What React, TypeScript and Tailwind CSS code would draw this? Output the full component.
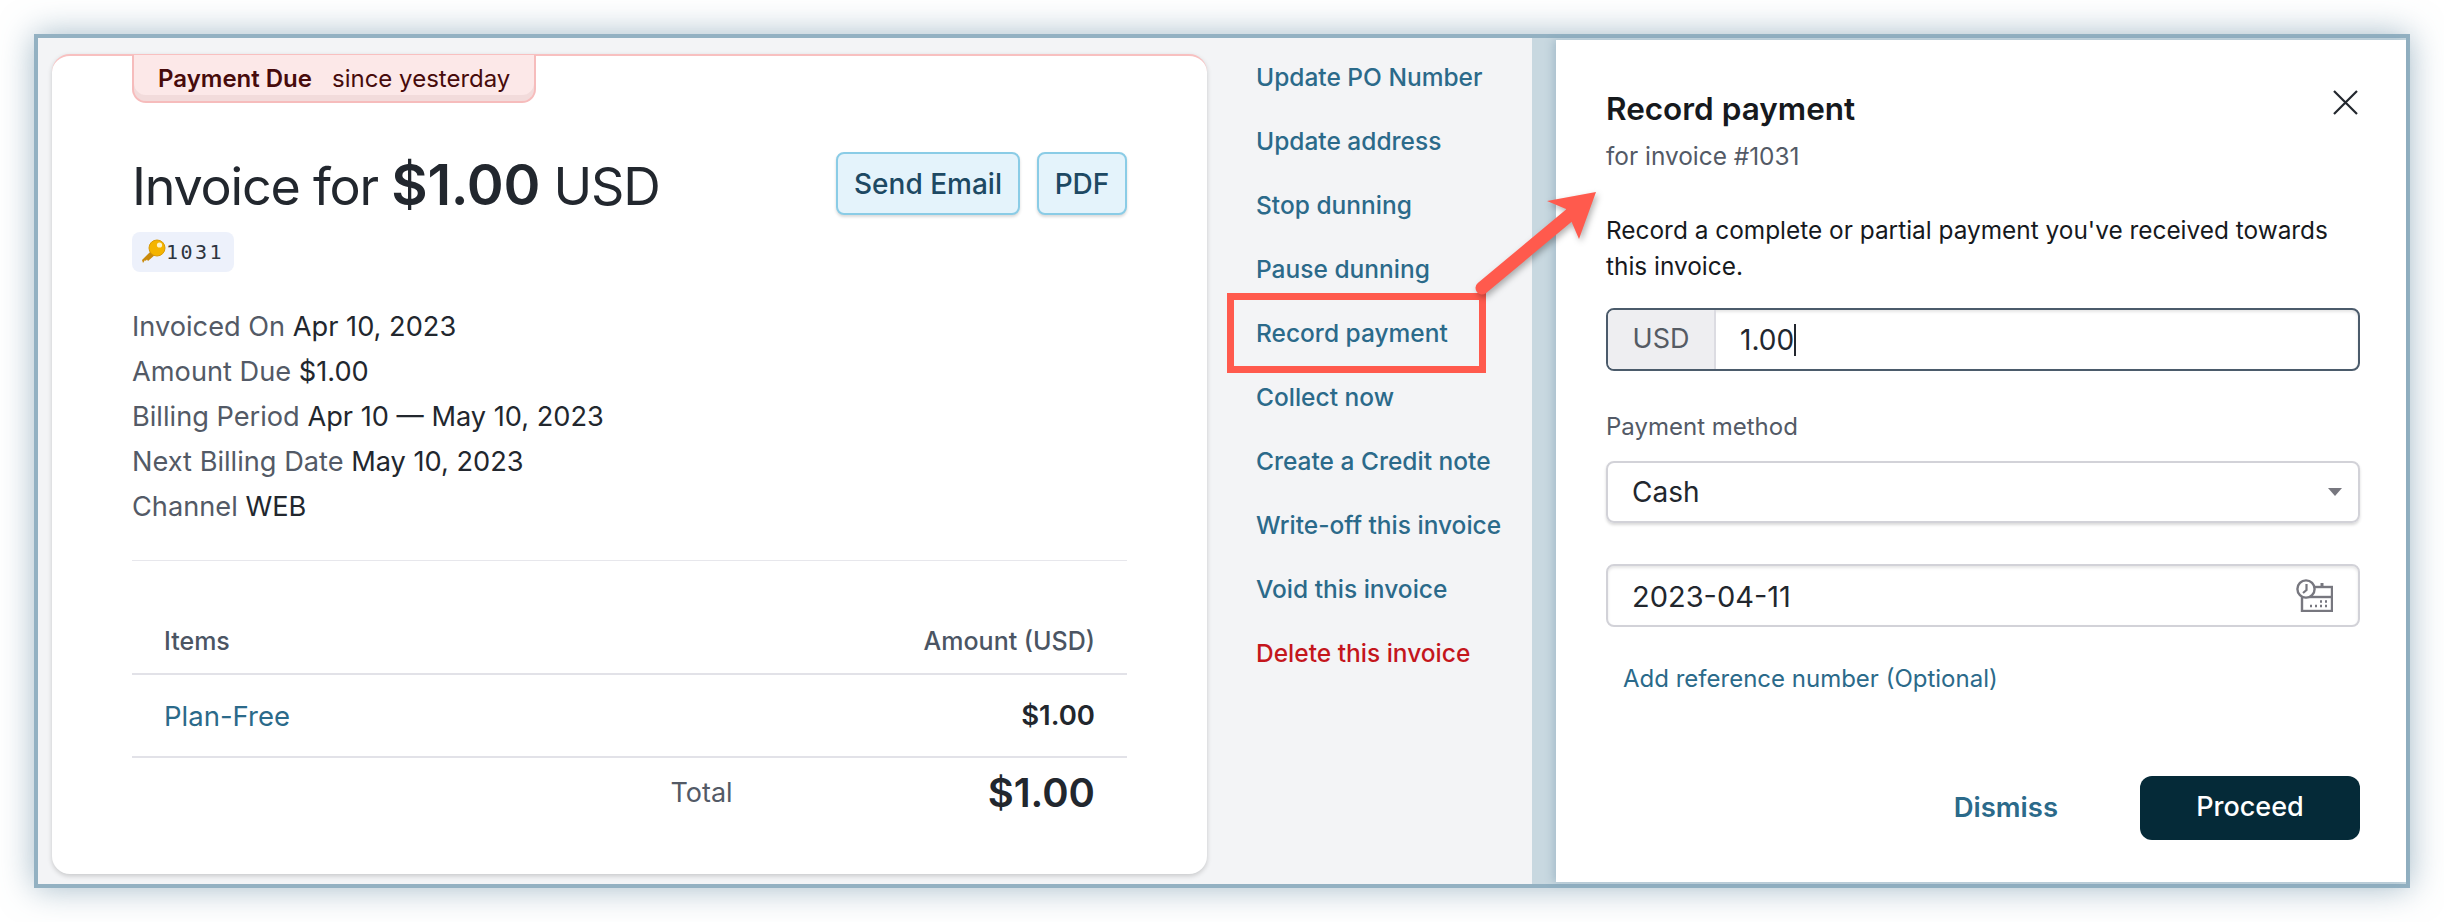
const details = [
  ["Invoiced On", "Apr 10, 2023"],
  ["Amount Due", "$1.00"],
  ["Billing Period", "Apr 10 — May 10, 2023"],
  ["Next Billing Date", "May 10, 2023"],
  ["Channel", "WEB"],
];

const actions = [
  "Update PO Number",
  "Update address",
  "Stop dunning",
  "Pause dunning",
  "Record payment",
  "Collect now",
  "Create a Credit note",
  "Write-off this invoice",
  "Void this invoice",
];

const KeyIcon = () => (
  <svg width="26" height="26" viewBox="0 0 26 26">
    <path d="M3 24 L2 21 L12 11 L16 15 L8 22 L7 20.5 L5.5 22 L5 21 Z" fill="#c98a0a" />
    <circle cx="17" cy="9" r="8" fill="#f4b400" />
    <circle cx="17" cy="9" r="8" fill="none" stroke="#d99a06" strokeWidth="1" />
    <circle cx="19.5" cy="6" r="2.6" fill="#fff4c8" />
  </svg>
);

const DateIcon = () => (
  <svg width="37" height="33" viewBox="0 0 37 33" fill="none" stroke="#77777f">
    <rect x="6" y="8" width="30" height="24" strokeWidth="2.4" />
    <path d="M6 18h30" strokeWidth="2.4" />
    <path d="M26 4v5" strokeWidth="3" />
    <circle cx="10" cy="10" r="8.6" fill="#fff" strokeWidth="2.4" />
    <path d="M10.5 5v6L7 14" strokeWidth="2.2" />
    <path d="M14 27h2M19 27h2M24 27h2M29 27h2M24 22.5h2M29 22.5h2" strokeWidth="2.4" />
  </svg>
);

const Annotation = () => (
  <svg className="absolute left-[1220px] top-[180px]" width="390" height="200" viewBox="0 0 390 200" fill="none">
    <rect x="10.5" y="116.5" width="252" height="73" stroke="#ff5a4d" strokeWidth="7" />
    <g className="drop-shadow-[2px_3px_3px_rgba(0,0,0,0.3)]">
      <path d="M262 108 L352 33" stroke="#ff5a4d" strokeWidth="13" strokeLinecap="round" />
      <path d="M376 12 L327 21 L346 29 L359 59 Z" fill="#ff5a4d" />
    </g>
  </svg>
);

export default function App() {
  return (
    <div className="relative w-[2444px] h-[922px] bg-white pl-[34px] pt-[34px] font-[Inter,sans-serif] text-[#22272e]">
      <div className="flex w-[2376px] h-[854px] border-4 border-[#93b1c2] bg-[#f3f4f6] shadow-[0_0_32px_rgba(90,130,155,0.55)]">
        <div className="flex flex-1">
          <div className="ml-[14px] mt-[16px] w-[1155px] h-[820px] shrink-0 rounded-[18px] border-t-2 border-[#f8c0c0] bg-white px-[80px] shadow-[0_2px_5px_rgba(0,0,0,0.18)]">
            <div className="inline-flex h-[48px] w-[404px] -mt-px items-center gap-[20px] rounded-b-[14px] border-x-2 border-b-2 border-[#f6bcbc] bg-[#fce8e8] pl-[24px] pt-[1px] text-[24px] text-[#470b0b] shadow-[inset_0_-6px_0_rgba(120,60,60,0.07)]">
              <span className="font-semibold">Payment Due</span>
              <span>since yesterday</span>
            </div>

            <div className="mt-[49px] flex h-[63px] items-center justify-between">
              <h1 className="pt-[3px] text-[52px] tracking-[-1.2px]">
                Invoice for <span className="text-[56px] font-semibold tracking-[-0.3px]">$1.00</span> USD
              </h1>
              <div className="flex gap-[17px]">
                <button className="h-[63px] w-[184px] rounded-[8px] border-2 border-[#8accE6] bg-[#e4f3fb] text-[28px] font-medium text-[#1d4963] shadow-[0_2px_3px_rgba(0,0,0,0.15)]">Send Email</button>
                <button className="h-[63px] w-[90px] rounded-[8px] border-2 border-[#8accE6] bg-[#e4f3fb] text-[28px] font-medium text-[#1d4963] shadow-[0_2px_3px_rgba(0,0,0,0.15)]">PDF</button>
              </div>
            </div>

            <div className="mt-[17px] flex h-[40px] w-[102px] items-center rounded-[8px] bg-[#edf1fb] pl-[8px] font-['DejaVu_Sans_Mono',monospace] text-[20px] text-[#2e3540]">
              <KeyIcon />
              <span className="tracking-[2.5px]">1031</span>
            </div>

            <div className="mt-[32px] border-b border-[#e7e7ec] pb-[31px]">
              {details.map(([label, value]) => (
                <div key={label} className="h-[45px] text-[27.2px] leading-[45px]">
                  <span className="text-[#535a66]">{label}</span> {value}
                </div>
              ))}
            </div>

            <div className="mt-[50px] flex h-[64px] items-center justify-between border-b-2 border-[#e2e2e8] px-[32px] text-[25px] font-medium text-[#4b5563]">
              <span>Items</span>
              <span>Amount (USD)</span>
            </div>
            <div className="flex h-[83px] items-center justify-between border-b-2 border-[#e2e2e8] px-[32px]">
              <span className="mt-[2px] text-[27.5px] text-[#2b6a8a]">Plan-Free</span>
              <span className="text-[27.5px] font-semibold">$1.00</span>
            </div>
            <div className="flex h-[70px] items-center justify-end px-[32px]">
              <span className="mr-[255px] text-[27px] text-[#535a66]">Total</span>
              <span className="text-[40px] font-semibold">$1.00</span>
            </div>
          </div>

          <ul className="ml-[49px] mt-[19px] text-[24.5px] font-medium text-[#2b6a8a]">
            {actions.map((action) => (
              <li key={action} className="h-[64px] leading-[40px] whitespace-nowrap">{action}</li>
            ))}
            <li className="h-[64px] leading-[40px] text-[#c4161c]">Delete this invoice</li>
          </ul>
        </div>

        <div className="flex h-full w-[874px] shrink-0 bg-[#c8d8e0] py-[2px] pl-[24px]">
          <div className="flex-1 bg-white pl-[50px] pr-[46px] pt-[48px] shadow-[-3px_0_8px_rgba(90,130,155,0.3)]">
            <div className="flex items-start justify-between">
              <h2 className="text-[31.5px] font-semibold leading-[42px] text-[#16191d]">Record payment</h2>
              <svg className="mt-[2px] mr-[2px]" width="25" height="25" viewBox="0 0 25 25" stroke="#22272e" strokeWidth="2.2">
                <path d="M1 1l23 23M24 1L1 24" />
              </svg>
            </div>
            <p className="mt-[11px] text-[24.4px] leading-[30px] text-[#535a66]">for invoice #1031</p>
            <p className="mt-[41px] text-[24.4px] leading-[36px] text-[#16191d]">
              Record a complete or partial payment you've received towards this invoice.
            </p>

            <div className="mt-[24px] flex h-[63px] overflow-hidden rounded-[8px] border-2 border-[#4b5b6b] shadow-[inset_0_2px_3px_rgba(0,0,0,0.1)]">
              <div className="flex w-[108px] items-center justify-center border-r-2 border-[#dcdce2] bg-[#eeeef1] text-[27px] text-[#555b64]">USD</div>
              <div className="flex items-center pl-[24px] text-[28px]">
                1.00<span className="h-[32px] w-[2px] bg-[#22272e]"></span>
              </div>
            </div>

            <label className="mt-[41px] block text-[24px] leading-[30px] text-[#535a66]">Payment method</label>
            <div className="mt-[19px] flex h-[62px] items-center justify-between rounded-[8px] border-2 border-[#d2d2d8] pl-[24px] pr-[16px] text-[28px] shadow-[0_2px_3px_rgba(0,0,0,0.15)]">
              Cash
              <span className="h-0 w-0 border-x-[7px] border-t-[8px] border-x-transparent border-t-[#77777f]"></span>
            </div>

            <div className="mt-[41px] flex h-[63px] items-center justify-between rounded-[8px] border-2 border-[#d2d2d8] pl-[24px] pr-[25px] text-[29px] shadow-[inset_0_2px_3px_rgba(0,0,0,0.1)]">
              <span className="mt-[2px]">2023-04-11</span>
              <DateIcon />
            </div>

            <a className="ml-[17px] mt-[37px] block text-[24px] leading-[30px] text-[#2b6a8a]">Add reference number (Optional)</a>

            <div className="mt-[82px] flex items-center justify-end">
              <button className="mr-[82px] text-[27.5px] font-semibold text-[#2b6a8a]">Dismiss</button>
              <button className="h-[64px] w-[220px] rounded-[12px] bg-[#052a38] pb-[2px] text-[27px] font-medium text-white">Proceed</button>
            </div>
          </div>
        </div>
      </div>
      <Annotation />
    </div>
  );
}
